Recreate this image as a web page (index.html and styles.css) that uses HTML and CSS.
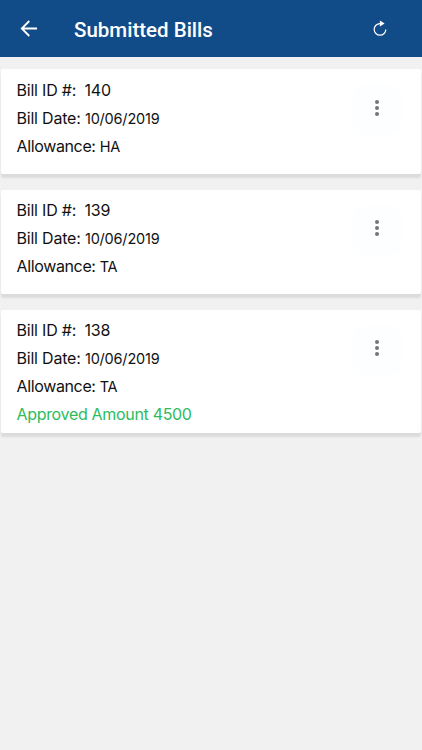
FILE: index.html
```html
<!DOCTYPE html>
<html lang="en">
<head>
    <meta charset="UTF-8">
    <meta name="viewport" content="width=device-width, initial-scale=1.0">
    <title>Submitted Bills</title>
    <link rel="stylesheet" href="styles.css">
</head>
<body>
    <header class="toolbar">
        <button class="icon-btn" aria-label="Back">
            <svg width="18" height="18" viewBox="0 0 18 18">
                <path d="M17 8.5H2M9.3 1L1.8 8.5L9.3 16" fill="none" stroke="#fff" stroke-width="1.8"/>
            </svg>
        </button>
        <h1>Submitted Bills</h1>
        <button class="icon-btn refresh" aria-label="Refresh">
            <svg width="14" height="16" viewBox="0 0 14 16">
                <path d="M8.2 2.6H7A5.8 5.8 0 1 0 12.8 8.4" fill="none" stroke="#fff" stroke-width="1.2"/>
                <path d="M6.9 -0.4L11.6 2.6L6.9 5.6Z" fill="#fff"/>
            </svg>
        </button>
    </header>

    <main class="bills">
        <div class="card">
            <div class="details">
                <p>Bill ID #: <span class="number">140</span></p>
                <p>Bill Date: <span class="value">10/06/2019</span></p>
                <p class="allowance">Allowance: <span class="value">HA</span></p>
            </div>
            <button class="menu" aria-label="More"><i></i><i></i><i></i></button>
        </div>
        <div class="card">
            <div class="details">
                <p>Bill ID #: <span class="number">139</span></p>
                <p>Bill Date: <span class="value">10/06/2019</span></p>
                <p class="allowance">Allowance: <span class="value">TA</span></p>
            </div>
            <button class="menu" aria-label="More"><i></i><i></i><i></i></button>
        </div>
        <div class="card approved">
            <div class="details">
                <p>Bill ID #: <span class="number">138</span></p>
                <p>Bill Date: <span class="value">10/06/2019</span></p>
                <p class="allowance">Allowance: <span class="value">TA</span></p>
                <p class="amount">Approved Amount 4500</p>
            </div>
            <button class="menu" aria-label="More"><i></i><i></i><i></i></button>
        </div>
    </main>
</body>
</html>
```
FILE: styles.css
```css
body {
    font-family: Inter, sans-serif;
    background-color: #f1f1f1;
    color: #111;
    margin: 0;
    min-height: 100vh;
}
button {
    border: none;
    background: none;
    padding: 0;
}
.toolbar {
    display: flex;
    align-items: center;
    box-sizing: border-box;
    height: 57px;
    padding: 0 34px 0 20px;
    background-color: #124c88;
}
.toolbar h1 {
    flex: 1;
    margin: 2px 0 0 36px;
    font-family: Roboto, sans-serif;
    font-size: 20.5px;
    font-weight: 500;
    line-height: 24px;
    color: #fff;
}
.icon-btn svg {
    display: block;
    overflow: visible;
}
.refresh {
    margin-right: 1px;
}
.bills {
    display: flex;
    flex-direction: column;
    gap: 16px;
    padding: 12.4px 1px 20px;
}
.card {
    display: flex;
    justify-content: space-between;
    align-items: flex-start;
    box-sizing: border-box;
    height: 104.2px;
    padding: 6.4px 18px 0 15.5px;
    background-color: #fff;
    border-radius: 2px;
    box-shadow: 0 4px 2px rgba(0, 0, 0, 0.09);
}
.card.approved {
    height: 123.5px;
}
.details p {
    margin: 0;
    font-size: 16px;
    line-height: 28px;
    letter-spacing: -0.2px;
    white-space: nowrap;
}
.number {
    margin-left: 4px;
}
.value {
    font-size: 14.5px;
    line-height: 1;
}
.details .allowance {
    letter-spacing: -0.36px;
}
.details .amount {
    color: #2dbb5d;
    letter-spacing: -0.32px;
}
.menu {
    display: flex;
    flex-direction: column;
    align-items: center;
    gap: 2px;
    box-sizing: border-box;
    width: 52px;
    height: 52px;
    margin-top: 8.6px;
    padding-top: 15.5px;
    border-radius: 20px;
    background-color: #fdfeff;
}
.menu i {
    width: 4px;
    height: 4px;
    border-radius: 50%;
    background-color: #757575;
}
```
